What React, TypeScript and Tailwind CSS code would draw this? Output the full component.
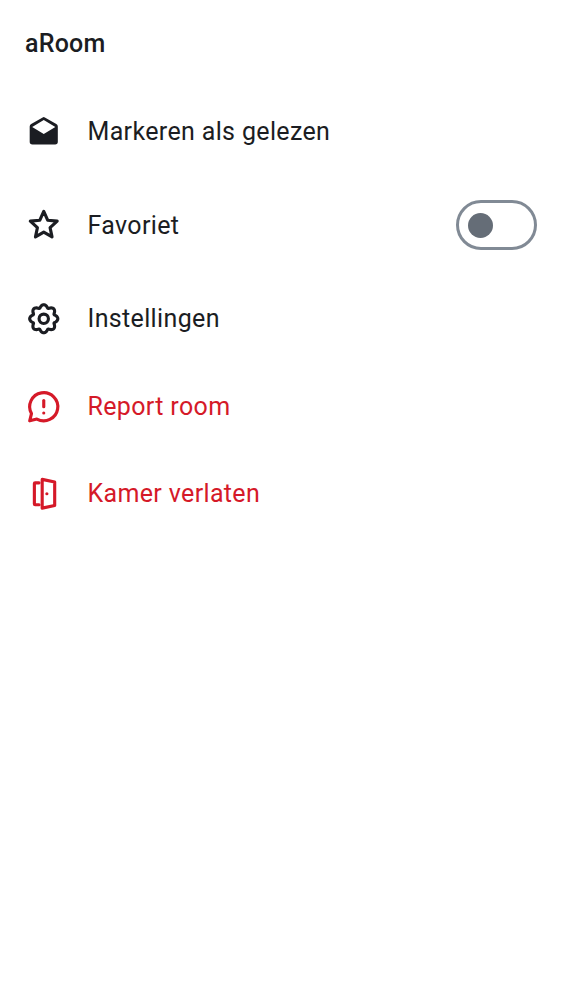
import type { ReactNode } from "react";

function Icon({ children }: { children: ReactNode }) {
  return (
    <svg
      viewBox="0 0 24 24"
      className="size-[37.5px] shrink-0"
      fill="none"
      stroke="currentColor"
      strokeWidth={2}
      strokeLinecap="round"
      strokeLinejoin="round"
      aria-hidden="true"
    >
      {children}
    </svg>
  );
}

function MarkAsReadIcon() {
  return (
    <Icon>
      <path
        stroke="none"
        fill="currentColor"
        fillRule="evenodd"
        d="M11.3 2.8a1.4 1.4 0 0 1 1.4 0l7.35 4.25Q21 7.65 21 8.65V18.4a1.75 1.75 0 0 1-1.75 1.75H4.75A1.75 1.75 0 0 1 3 18.4V8.65Q3 7.65 3.95 7.05ZM12 4.55 4.6 8.9l7.4 4.6L19.4 8.9Z"
      />
    </Icon>
  );
}

function FavouriteIcon() {
  return (
    <Icon>
      <path d="m12 3.5 2.5 5.6 6.1.6-4.55 4.15 1.25 5.95L12 16.75 6.7 19.8l1.25-5.95L3.4 9.7l6.1-.6Z" />
    </Icon>
  );
}

// Eight rounded teeth with narrow valleys between them.
const gearOutline =
  Array.from({ length: 160 }, (_, i) => {
    const angle = (i / 160) * Math.PI * 2;
    const radius = 6.65 + 2.3 * Math.sqrt(Math.cos(4 * angle) ** 2 + 0.04);
    const x = 12 + radius * Math.sin(angle);
    const y = 12 - radius * Math.cos(angle);
    return `${i === 0 ? "M" : "L"}${x.toFixed(2)} ${y.toFixed(2)}`;
  }).join("") + "Z";

function SettingsIcon() {
  return (
    <Icon>
      <path d={gearOutline} />
      <circle cx="12" cy="12" r="3" />
    </Icon>
  );
}

function ReportIcon() {
  return (
    <Icon>
      <path d="M7.6 19.85A9 9 0 1 0 4.15 16.4L3 21Z" />
      <path d="M12 8v4" />
      <circle cx="12" cy="16" r="1" fill="currentColor" stroke="none" />
    </Icon>
  );
}

function LeaveIcon() {
  return (
    <Icon>
      <path d="M9 5H6.5Q6 5 6 5.5v13q0 .5.5.5H9" />
      <path d="M11 2.8 19 4.5v15l-8 1.7Z" />
      <circle cx="14" cy="12" r="1" fill="currentColor" stroke="none" />
    </Icon>
  );
}

type RowProps = {
  icon: ReactNode;
  label: string;
  danger?: boolean;
  trailing?: ReactNode;
};

function Row({ icon, label, danger, trailing }: RowProps) {
  return (
    <li
      className={`flex items-center gap-[25px] px-[25px] ${trailing ? "h-[100px]" : "h-[87.5px]"} ${danger ? "text-[#d51928]" : "text-[#1b1d22]"}`}
    >
      {icon}
      <span className={`flex-1 text-[25px] leading-[37.5px] tracking-[0.35px] ${trailing ? "pt-px" : "pt-[0.5px]"}`}>
        {label}
      </span>
      {trailing}
    </li>
  );
}

function Switch() {
  return (
    <button
      type="button"
      role="switch"
      aria-checked="false"
      aria-label="Favoriet"
      className="flex h-[50px] w-[81px] items-center rounded-full border-[3px] border-[#818a95] pl-[9px]"
    >
      <span className="size-[25px] rounded-full bg-[#656d77]" />
    </button>
  );
}

export default function App() {
  return (
    <main className="min-h-screen bg-white font-['Roboto',sans-serif]">
      <header className="flex h-[87.5px] items-center px-[25px]">
        <h1 className="text-[25px] leading-[37.5px] font-medium tracking-[0.23px] text-[#1b1d22]">aRoom</h1>
      </header>
      <ul>
        <Row icon={<MarkAsReadIcon />} label="Markeren als gelezen" />
        <Row icon={<FavouriteIcon />} label="Favoriet" trailing={<Switch />} />
        <Row icon={<SettingsIcon />} label="Instellingen" />
        <Row icon={<ReportIcon />} label="Report room" danger />
        <Row icon={<LeaveIcon />} label="Kamer verlaten" danger />
      </ul>
    </main>
  );
}
